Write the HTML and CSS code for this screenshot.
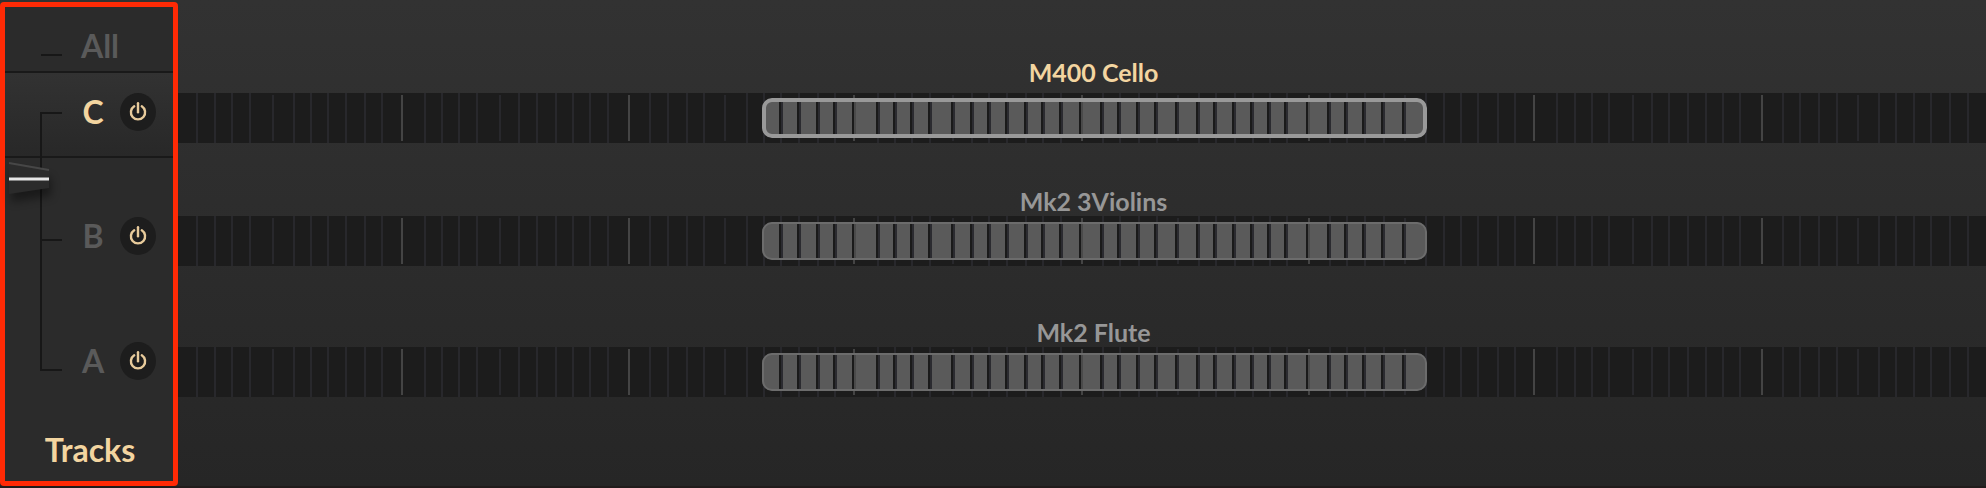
FILE: index.html
```html
<!DOCTYPE html>
<html lang="en">
<head>
    <meta charset="UTF-8">
    <meta name="viewport" content="width=device-width, initial-scale=1.0">
    <title>Tracks</title>
    <link rel="stylesheet" href="styles.css">
</head>
<body>
    <svg class="symbols" aria-hidden="true">
        <symbol id="power" viewBox="0 0 18 20">
            <path d="M5.2 4.3 A7.1 7.1 0 1 0 12.8 4.3" />
            <path d="M9 1.2 V10.2" />
        </symbol>
    </svg>

    <div class="mixer">
        <aside class="panel">
            <div class="fader-area">
                <svg class="scale" viewBox="0 0 57 400" aria-hidden="true">
                    <path d="M36 48 H57 M57 106 H36 V363 H57 M36 233 H57" />
                </svg>
                <svg class="fader" viewBox="0 0 48 56" aria-hidden="true">
                    <path class="fader-body" d="M0 2 L40 9 V27 L0 33 Z" />
                    <path d="M0 2 L40 9" stroke="#474747" stroke-width="2" />
                    <path d="M0 18 H40" stroke="#e6e6e6" stroke-width="3" />
                </svg>
            </div>

            <div class="row row-all">
                <span class="name">All</span>
            </div>
            <div class="row row-c selected">
                <span class="name">C</span>
                <button type="button" class="power" aria-label="Track C power"><svg><use href="#power" /></svg></button>
            </div>
            <div class="row row-b">
                <span class="name">B</span>
                <button type="button" class="power" aria-label="Track B power"><svg><use href="#power" /></svg></button>
            </div>
            <div class="row row-a">
                <span class="name">A</span>
                <button type="button" class="power" aria-label="Track A power"><svg><use href="#power" /></svg></button>
            </div>
            <h1 class="title">Tracks</h1>
        </aside>

        <main class="lanes">
            <section class="track selected">
                <h2 class="sound">M400 Cello</h2>
                <div class="keys"></div>
            </section>
            <section class="track">
                <h2 class="sound">Mk2 3Violins</h2>
                <div class="keys"></div>
            </section>
            <section class="track">
                <h2 class="sound">Mk2 Flute</h2>
                <div class="keys"></div>
            </section>
        </main>
    </div>

    <script src="script.js"></script>
</body>
</html>
```

FILE: styles.css
```css
* {
    box-sizing: border-box;
}

body {
    margin: 0;
    background: #272727;
    font-family: Lato, "Liberation Sans", sans-serif;
    font-weight: 700;
    color: #5a5a5a;
}

.symbols {
    display: none;
}

svg {
    display: block;
    fill: none;
}

.mixer {
    display: flex;
    min-height: 100vh;
    background: linear-gradient(#323232, #262626);
    border-bottom: 2px solid #211c1c;
}

/* Track selector */
.panel {
    position: relative;
    display: flex;
    flex-direction: column;
    width: 178px;
    margin-top: 2px;
    border: 5px solid #ff2a05;
    border-radius: 4px;
    background: #2b2b2b;
}

.fader-area {
    position: absolute;
    top: 0;
    left: 0;
}

.scale {
    width: 57px;
    height: 400px;
    stroke: #171717;
    stroke-width: 2;
}

.fader {
    position: absolute;
    top: 154px;
    left: 4px;
    width: 48px;
    height: 56px;
    overflow: visible;
}

.fader-body {
    fill: #2b2b2b;
    filter: drop-shadow(2px 8px 4px rgba(0, 0, 0, 0.4));
}

.row {
    display: flex;
    align-items: center;
    padding-left: 68px;
    font-size: 32px;
    line-height: 40px;
}

.name {
    width: 40px;
    text-align: center;
}

.row-all {
    height: 66px;
    padding-top: 14px;
    padding-left: 75px;
    border-bottom: 2px solid #191919;
}

.row-c {
    height: 85px;
    padding-bottom: 6px;
    border-bottom: 2px solid #191919;
    background: linear-gradient(#323232, #282828);
}

.row-b {
    height: 142px;
    padding-top: 14px;
}

.row-a {
    height: 130px;
    padding-bottom: 8px;
}

.selected .name,
.selected .sound,
.title {
    color: #f3d5a0;
}

.power {
    display: flex;
    align-items: center;
    justify-content: center;
    width: 36px;
    height: 38px;
    margin-left: 7px;
    padding: 0;
    border: 0;
    border-radius: 50%;
    background: #1d1d1d;
    cursor: pointer;
}

.power svg {
    width: 18px;
    height: 20px;
    stroke: #e8cb9b;
    stroke-width: 2.4;
    stroke-linecap: round;
}

.title {
    margin: 0;
    padding-left: 2px;
    text-align: center;
    font-size: 32px;
    line-height: 40px;
}

/* Keyboard ranges */
.lanes {
    flex: 1;
    padding-top: 59px;
}

.track + .track {
    margin-top: 45px;
}

.track:last-child {
    padding-top: 8px;
}

.sound {
    margin: 0;
    padding: 0 0 2px 23px;
    text-align: center;
    font-size: 25px;
    line-height: 26px;
    color: #979797;
}

.selected .sound {
    padding-bottom: 8px;
}

.keys {
    position: relative;
    display: flex;
    height: 50px;
    background: #1c1c1c;
}

.key {
    min-width: 0;
    border-right: 2px solid #28282c;
}

.key.fa,
.key.octave {
    margin: 2px 0;
}

.key.octave {
    border-right-color: #444;
}

.key.end,
.zone-key.end {
    border-right: 0;
    box-shadow: none;
}

.zone {
    position: absolute;
    top: 6px;
    bottom: 6px;
    display: flex;
    margin-left: -3px;
    padding-left: 4px;
    overflow: hidden;
    border-radius: 10px;
    background: #5a5a5a;
}

.zone::after {
    content: "";
    position: absolute;
    inset: 0;
    border: 2px solid #6c6c6c;
    border-radius: 10px;
}

.selected .zone {
    top: 5px;
    bottom: 5px;
}

.selected .zone::after {
    border: 4px solid #999;
}

.zone-key {
    min-width: 0;
    border-right: 2px solid #2b2b30;
    box-shadow: inset -2px 0 #1a1a1a;
}

.zone-key.octave {
    border-right-color: #4a4a4a;
}
```

FILE: script.js
```js
// White key widths across the visible keyboard
const widths = [
    20, 18, 17, 18, 23, 21, 17, 17, 18, 19, 17, 20,
    23, 17, 17, 18, 23, 19, 18, 19, 17, 17, 18, 21,
    21, 18, 19, 17, 21, 22, 17, 17, 18, 19, 17, 19,
    24, 17, 17, 18, 23, 19, 17, 18, 19, 17, 18, 21,
    21, 17, 19, 18, 21, 21, 17, 19, 18, 17, 17, 22,
    21, 17, 18, 19, 21, 21, 18, 17, 17, 20, 17, 19,
    23, 18, 17, 17, 24, 19, 17, 19, 18, 17, 17, 22,
    21, 17, 19, 18, 21, 21, 17, 18, 17, 19, 18, 17
];

// Playable range of each sound
const first = 31;
const last = 66;

function sum(list) {
    return list.reduce((a, b) => a + b, 0);
}

function addKeys(parent, name, from, to) {
    for (let i = from; i < to; i++) {
        const key = document.createElement('div');
        key.className = name;
        if (i % 12 === 4) key.classList.add('fa');
        if (i % 12 === 11) key.classList.add('octave');
        if (i === to - 1) key.classList.add('end');
        key.style.flex = `${widths[i]} 1 ${widths[i]}px`;
        parent.appendChild(key);
    }
}

document.querySelectorAll('.keys').forEach(keys => {
    addKeys(keys, 'key', 0, widths.length);

    const total = sum(widths);
    const zone = document.createElement('div');
    zone.className = 'zone';
    zone.style.left = `${sum(widths.slice(0, first)) / total * 100}%`;
    zone.style.right = `${sum(widths.slice(last)) / total * 100}%`;
    addKeys(zone, 'zone-key', first, last);
    keys.appendChild(zone);
});
```
